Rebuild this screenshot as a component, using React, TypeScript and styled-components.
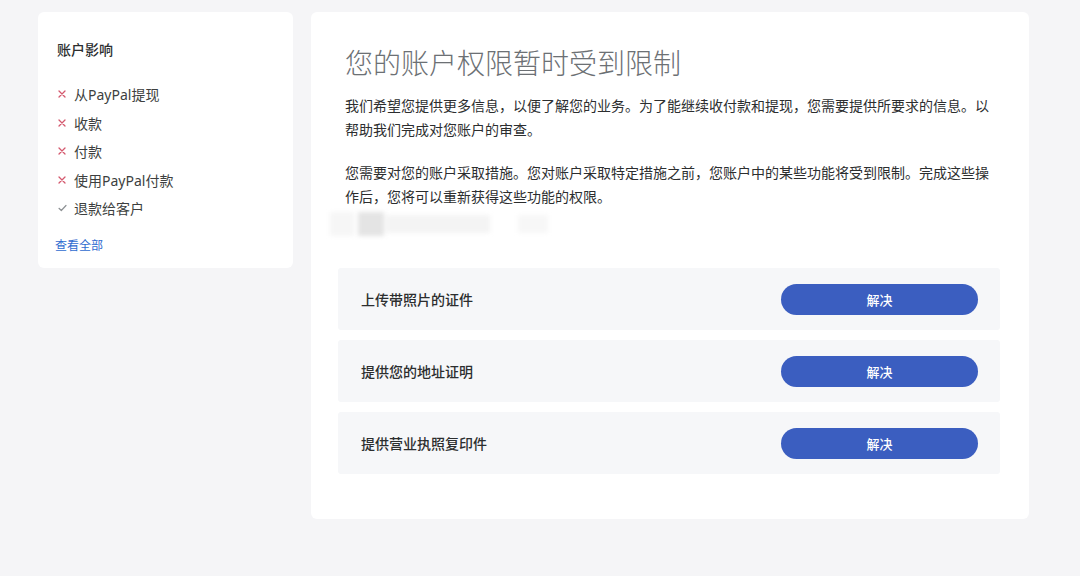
import React from "react";
import styled, { createGlobalStyle } from "styled-components";

const GlobalStyle = createGlobalStyle`
  html, body {
    margin: 0;
    padding: 0;
    background: #f5f5f7;
  }
  body {
    font-family: "Noto Sans", "Noto Sans CJK SC", sans-serif;
    color: #2c2e2f;
  }
  * { box-sizing: border-box; }
`;

const Page = styled.div`
  display: flex;
  align-items: flex-start;
  gap: 18px;
  padding: 12px 0 0 38px;
  min-height: 576px;
`;

const SideCard = styled.aside`
  width: 255px;
  background: #ffffff;
  border-radius: 6px;
  padding: 28px 19px 13px 17px;
  display: flex;
  flex-direction: column;
`;

const SideTitle = styled.h3`
  margin: 0 0 20px 2px;
  font-size: 14px;
  line-height: 20px;
  font-weight: 500;
  color: #2c2e2f;
`;

const ImpactList = styled.ul`
  list-style: none;
  margin: 0;
  padding: 0;
`;

const ImpactItem = styled.li`
  display: flex;
  align-items: center;
  height: 28.5px;
  font-size: 14px;
  color: #3d3f40;
`;

const Mark = styled.span`
  width: 16px;
  margin-left: 3px;
  display: inline-flex;
  align-items: center;
`;

const ViewAll = styled.a`
  margin-top: 14px;
  font-size: 12px;
  line-height: 18px;
  color: #2f6cd0;
  text-decoration: none;
  cursor: pointer;
`;

const MainCard = styled.main`
  width: 718px;
  background: #ffffff;
  border-radius: 6px;
  padding: 33px 29px 45px 27px;
`;

const Intro = styled.div`
  padding: 0 7px;
`;

const Title = styled.h1`
  margin: 0 0 13px;
  font-size: 28px;
  line-height: 36px;
  font-weight: 300;
  color: #6c7074;
`;

const Para = styled.p<{ $gap?: number }>`
  margin: 0 0 ${(p) => p.$gap ?? 0}px;
  font-size: 14px;
  line-height: 24px;
  color: #2c2e2f;
`;

const Redacted = styled.div`
  display: flex;
  align-items: center;
  height: 29px;
  margin: 0 0 30px -15px;
  filter: blur(2px);
`;

const Smudge = styled.span<{ $w: number; $h: number; $c: string; $ml?: number }>`
  display: block;
  width: ${(p) => p.$w}px;
  height: ${(p) => p.$h}px;
  margin-left: ${(p) => p.$ml ?? 0}px;
  background: ${(p) => p.$c};
`;

const Tasks = styled.div`
  display: flex;
  flex-direction: column;
  gap: 10px;
`;

const TaskRow = styled.div`
  height: 62px;
  background: #f6f7f9;
  border-radius: 3px;
  display: flex;
  align-items: center;
  justify-content: space-between;
  padding: 0 22px 0 23px;
`;

const TaskLabel = styled.span`
  font-size: 14px;
  font-weight: 500;
  color: #2c2e2f;
`;

const ResolveButton = styled.button`
  width: 197px;
  height: 31px;
  border: none;
  border-radius: 16px;
  background: #3b5ec0;
  color: #ffffff;
  font-family: "Noto Sans", "Noto Sans CJK SC", sans-serif;
  font-size: 13px;
  font-weight: 500;
  cursor: pointer;
`;

const Cross = () => (
  <svg width="8" height="8" viewBox="0 0 8 8">
    <path d="M1 1L7 7M7 1L1 7" stroke="#d4596e" strokeWidth="1.3" strokeLinecap="round" />
  </svg>
);

const Check = () => (
  <svg width="9" height="8" viewBox="0 0 9 8">
    <path d="M1 4.3L3.3 6.5L8 1.5" stroke="#8d9194" strokeWidth="1.2" fill="none" strokeLinecap="round" strokeLinejoin="round" />
  </svg>
);

const impacts: { text: string; ok: boolean }[] = [
  { text: "从PayPal提现", ok: false },
  { text: "收款", ok: false },
  { text: "付款", ok: false },
  { text: "使用PayPal付款", ok: false },
  { text: "退款给客户", ok: true },
];

const tasks = ["上传带照片的证件", "提供您的地址证明", "提供营业执照复印件"];

export default function App() {
  return (
    <>
      <GlobalStyle />
      <Page>
        <SideCard>
          <SideTitle>账户影响</SideTitle>
          <ImpactList>
            {impacts.map((i) => (
              <ImpactItem key={i.text}>
                <Mark>{i.ok ? <Check /> : <Cross />}</Mark>
                {i.text}
              </ImpactItem>
            ))}
          </ImpactList>
          <ViewAll>查看全部</ViewAll>
        </SideCard>
        <MainCard>
          <Intro>
            <Title>您的账户权限暂时受到限制</Title>
            <Para $gap={19}>
              我们希望您提供更多信息，以便了解您的业务。为了能继续收付款和提现，您需要提供所要求的信息。以帮助我们完成对您账户的审查。
            </Para>
            <Para>
              您需要对您的账户采取措施。您对账户采取特定措施之前，您账户中的某些功能将受到限制。完成这些操作后，您将可以重新获得这些功能的权限。
            </Para>
            <Redacted>
              <Smudge $w={24} $h={24} $c="#f6f6f6" />
              <Smudge $w={26} $h={24} $c="#e4e4e4" $ml={4} />
              <Smudge $w={104} $h={18} $c="#f4f4f4" $ml={2} />
              <Smudge $w={30} $h={18} $c="#f7f7f7" $ml={28} />
            </Redacted>
          </Intro>
          <Tasks>
            {tasks.map((t) => (
              <TaskRow key={t}>
                <TaskLabel>{t}</TaskLabel>
                <ResolveButton>解决</ResolveButton>
              </TaskRow>
            ))}
          </Tasks>
        </MainCard>
      </Page>
    </>
  );
}
